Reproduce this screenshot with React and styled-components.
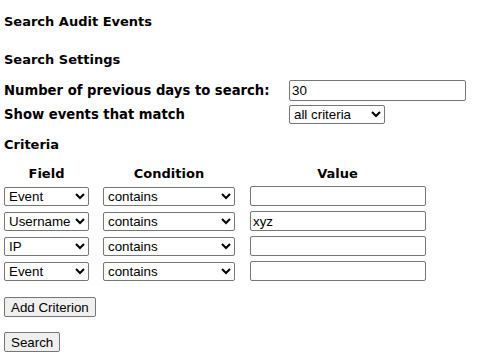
import styled, { createGlobalStyle } from 'styled-components';

const GlobalStyle = createGlobalStyle`
  body {
    margin: 0;
    background: #fff;
    color: #000;
    font-family: "DejaVu Sans", Verdana, sans-serif;
  }
`;

const Page = styled.div`
  display: flex;
  flex-direction: column;
  align-items: flex-start;
  padding: 14px 4px 8px 4px;
`;

const Heading = styled.div`
  font-size: 13px;
  font-weight: bold;
  line-height: 16px;
  margin-top: ${(p) => p.$gap || 0}px;
`;

const SettingsGrid = styled.div`
  display: grid;
  grid-template-columns: 285px auto;
  row-gap: 4px;
  align-items: center;
  margin-top: 12px;
`;

const Label = styled.label`
  font-size: 13.2px;
  font-weight: bold;
  line-height: 16px;
`;

const controlFont = `
  font-family: "Liberation Sans", Arial, sans-serif;
  font-size: 13.33px;
  color: #000;
`;

const TextInput = styled.input`
  ${controlFont}
  box-sizing: border-box;
  width: ${(p) => p.$width}px;
  height: ${(p) => p.$height || 20}px;
  border: 1px solid #767676;
  border-radius: 2px;
  padding: 1px 2px;
  margin: 0;
  background: #fff;
  justify-self: end;
`;

const Select = styled.select`
  ${controlFont}
  box-sizing: border-box;
  width: ${(p) => p.$width}px;
  height: 19px;
  border: 1px solid #767676;
  border-radius: 2px;
  padding: 0;
  margin: 0;
  background: #fff;
`;

const CriteriaGrid = styled.div`
  display: grid;
  grid-template-columns: 85px 132px 177px;
  column-gap: 14px;
  row-gap: 5px;
  align-items: center;
  margin-top: 13px;
`;

const ColHead = styled.div`
  font-size: 13px;
  font-weight: bold;
  line-height: 15px;
  text-align: center;
`;

const Button = styled.button`
  ${controlFont}
  box-sizing: border-box;
  height: 20px;
  padding: 0 6px;
  margin: ${(p) => p.$gap}px 0 0 0;
  background: #efefef;
  border: 1px solid #767676;
  border-radius: 2px;
`;

const criteria = [
  { field: 'Event', value: '' },
  { field: 'Username', value: 'xyz' },
  { field: 'IP', value: '' },
  { field: 'Event', value: '' },
];

export default function App() {
  return (
    <>
      <GlobalStyle />
      <Page>
        <Heading>Search Audit Events</Heading>
        <Heading $gap={22}>Search Settings</Heading>
        <SettingsGrid>
          <Label>Number of previous days to search:</Label>
          <TextInput $width={177} $height={21} defaultValue="30" />
          <Label>Show events that match</Label>
          <Select $width={96} defaultValue="all">
            <option value="all">all criteria</option>
            <option value="any">any criteria</option>
          </Select>
        </SettingsGrid>
        <Heading $gap={13}>Criteria</Heading>
        <CriteriaGrid>
          <ColHead>Field</ColHead>
          <ColHead>Condition</ColHead>
          <ColHead>Value</ColHead>
          {criteria.map((c, i) => (
            <Row key={i} criterion={c} />
          ))}
        </CriteriaGrid>
        <Button $gap={16}>Add Criterion</Button>
        <Button $gap={15}>Search</Button>
      </Page>
    </>
  );
}

function Row({ criterion }) {
  return (
    <>
      <Select $width={85} defaultValue={criterion.field}>
        <option>Event</option>
        <option>Username</option>
        <option>IP</option>
      </Select>
      <Select $width={132} defaultValue="contains">
        <option>contains</option>
        <option>equals</option>
        <option>starts with</option>
      </Select>
      <TextInput $width={176} defaultValue={criterion.value} />
    </>
  );
}
